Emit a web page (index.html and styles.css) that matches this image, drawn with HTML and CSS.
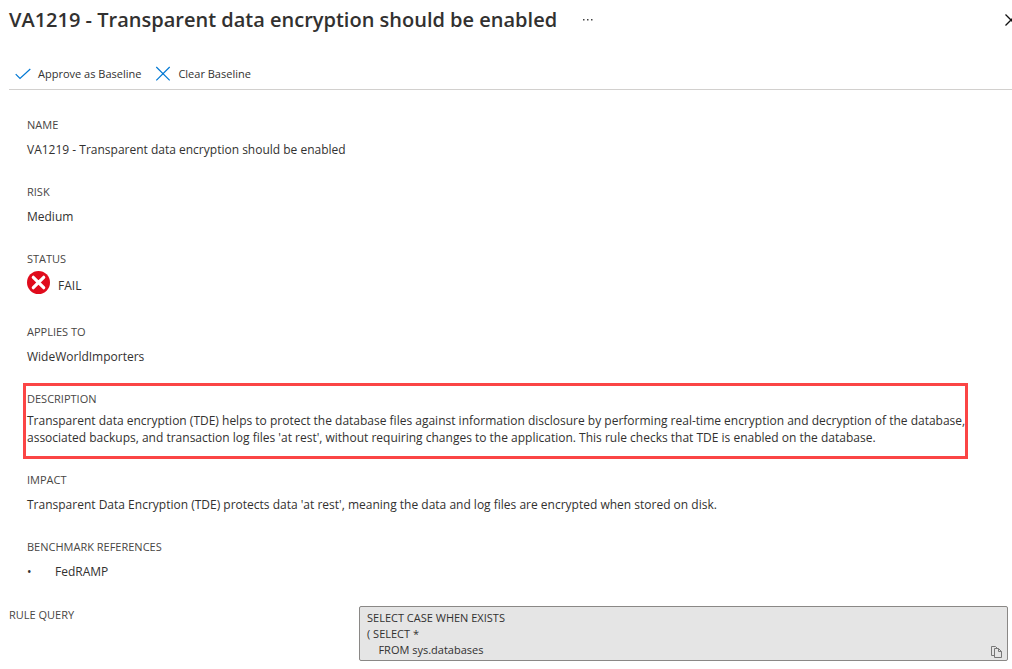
FILE: index.html
```html
<!DOCTYPE html>
<html lang="en">
<head>
<meta charset="utf-8">
<meta name="viewport" content="width=device-width, initial-scale=1">
<title>VA1219 - Transparent data encryption should be enabled</title>
<link rel="stylesheet" href="styles.css">
</head>
<body>
<main class="blade">
  <header class="header">
    <h1 class="title">VA1219 - Transparent data encryption should be enabled</h1>
    <button class="icon-button" type="button" aria-label="More actions">
      <svg width="10" height="2" viewBox="0 0 10 2" fill="#444"><path d="M0 0h1.5v1.5H0zM4 0h1.5v1.5H4zM8 0h1.5v1.5H8z"/></svg>
    </button>
    <button class="icon-button close" type="button" aria-label="Close">
      <svg width="12" height="12" viewBox="0 0 12 12" fill="none" stroke="#111" stroke-width="1.3"><path d="M.5.5l11 11M11.500.5l-11 11"/></svg>
    </button>
  </header>
  <div class="toolbar">
    <button class="command" type="button">
      <svg width="16" height="16" viewBox="0 0 16 16" fill="none" stroke="#0078d4" stroke-width="1.2"><path d="M.7 8.200l4.300 4.300L15.300 3"/></svg>
      Approve as Baseline
    </button>
    <button class="command" type="button">
      <svg width="16" height="16" viewBox="0 0 16 16" fill="none" stroke="#0078d4" stroke-width="1.2"><path d="M1.300 1l13.400 13.400M14.700 1L1.300 14.400"/></svg>
      Clear Baseline
    </button>
  </div>
  <div class="details">
    <section class="field">
      <h2 class="label">NAME</h2>
      <p class="value">VA1219 - Transparent data encryption should be enabled</p>
    </section>
    <section class="field">
      <h2 class="label">RISK</h2>
      <p class="value">Medium</p>
    </section>
    <section class="field status">
      <h2 class="label">STATUS</h2>
      <p class="value status-value">
        <svg width="23" height="23" viewBox="0 0 23 23"><circle cx="11.500" cy="11.500" r="11.500" fill="#e00b1c"/><path d="M6.300 6.300l10.400 10.400M16.700 6.300L6.300 16.700" stroke="#fff" stroke-width="3.200" stroke-linecap="round"/></svg>
        <span class="status-text">FAIL</span>
      </p>
    </section>
    <section class="field">
      <h2 class="label">APPLIES TO</h2>
      <p class="value">WideWorldImporters</p>
    </section>
    <section class="field highlight">
      <h2 class="label">DESCRIPTION</h2>
      <p class="value description">Transparent data encryption (TDE) helps to protect the database files against information disclosure by performing real-time encryption and decryption of the database, associated backups, and transaction log files 'at rest', without requiring changes to the application. This rule checks that TDE is enabled on the database.</p>
    </section>
    <section class="field">
      <h2 class="label">IMPACT</h2>
      <p class="value">Transparent Data Encryption (TDE) protects data 'at rest', meaning the data and log files are encrypted when stored on disk.</p>
    </section>
    <section class="field">
      <h2 class="label">BENCHMARK REFERENCES</h2>
      <ul class="value references"><li>FedRAMP</li></ul>
    </section>
  </div>
  <div class="query">
    <label class="label" for="rule-query">RULE QUERY</label>
    <div class="query-box">
      <textarea class="query-text" id="rule-query" rows="3" readonly>SELECT CASE WHEN EXISTS
( SELECT *
    FROM sys.databases</textarea>
      <button class="icon-button copy" type="button" aria-label="Copy to clipboard">
        <svg width="11" height="12" viewBox="0 0 11 12" fill="none" stroke="#777"><path d="M3 9.500H.5v-9h4L6 2M3.500 2.500h4l3 3v6h-7zM7.500 2.500v3h3"/></svg>
      </button>
    </div>
  </div>
</main>
</body>
</html>
```
FILE: styles.css
```css
* {
  box-sizing: border-box;
}

body {
  margin: 0;
  background: #fff;
  color: #323130;
  font-family: "Segoe UI", "Open Sans", sans-serif;
  font-size: 12px;
  line-height: 17px;
  overflow-x: hidden;
}

h1, h2, p, ul {
  margin: 0;
  padding: 0;
}

button {
  padding: 0;
  border: 0;
  background: none;
  color: inherit;
  font: inherit;
  cursor: pointer;
}

svg {
  display: block;
  flex: none;
}

.blade {
  padding-left: 9px;
}

.header {
  display: flex;
  align-items: center;
  gap: 26px;
  height: 40px;
}

.title {
  font-size: 20px;
  font-weight: 600;
  line-height: 28px;
}

.close {
  margin-left: auto;
  margin-right: -5px;
}

.toolbar {
  display: flex;
  gap: 14px;
  padding: 25px 6px 7px;
  border-bottom: 1px solid #d2d0ce;
}

.command {
  display: flex;
  align-items: center;
  gap: 7px;
  font-size: 11px;
}

.details {
  display: flex;
  flex-direction: column;
  gap: 25px;
  padding: 26px 44px 26px 18px;
}

.field {
  display: flex;
  flex-direction: column;
  gap: 8px;
}

.label {
  color: #484644;
  font-size: 11px;
  font-weight: 400;
  line-height: 17px;
}

.status {
  gap: 4px;
}

.status-value {
  display: flex;
  gap: 8px;
  padding-bottom: 4px;
}

.status-text {
  padding-top: 6px;
}

.highlight {
  gap: 5px;
  margin: -7px 0 -13px -4px;
  padding: 4px 0 10px 1px;
  border: 3px solid #fb4545;
}

.description {
  margin-right: -3px;
}

.references {
  list-style: none;
}

.references li {
  display: flex;
}

.references li::before {
  content: "•";
  width: 28px;
}

.query {
  display: grid;
  grid-template-columns: 350px 1fr;
  padding: 0 4px 8px 0;
}

.query-box {
  position: relative;
}

.query-text {
  display: block;
  width: 100%;
  padding: 3px 7px 2px;
  border: 1px solid #8a8886;
  border-radius: 2px;
  outline: 0;
  background: #e5e5e5;
  color: inherit;
  font: inherit;
  font-size: 11px;
  line-height: 16px;
  overflow: hidden;
  resize: none;
}

.copy {
  position: absolute;
  right: 6px;
  bottom: 3px;
}
```
